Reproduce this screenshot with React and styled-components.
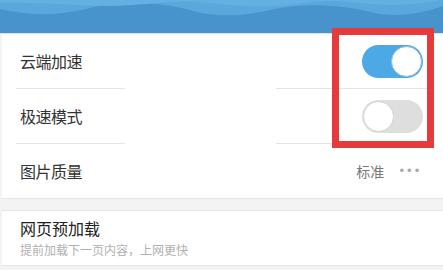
import React, { useState } from 'react'
import styled, { createGlobalStyle } from 'styled-components'

const GlobalStyle = createGlobalStyle`
  html, body {
    margin: 0;
    padding: 0;
    background: #f3f3f3;
    font-family: "Noto Sans CJK SC", "Noto Sans", sans-serif;
  }
`

const Page = styled.div`
  position: relative;
  width: 443px;
  height: 270px;
  overflow: hidden;
  background: #f3f3f3;
`

const Header = styled.div`
  height: 33px;
  background: #4893cc;
  border-bottom: 1px solid #cfe7f6;
  svg {
    display: block;
  }
`

const Card = styled.div`
  margin-left: 2px;
  background: #fff;
  border-bottom: 1px solid #e6e6e6;
  border-top: ${p => (p.$top ? '1px solid #e6e6e6' : 'none')};
  margin-top: ${p => (p.$top ? '11px' : '0')};
`

const Row = styled.div`
  height: 54px;
  display: flex;
  align-items: center;
  justify-content: space-between;
  padding: 0 20px 0 18px;
`

const Divider = styled.div`
  height: 1px;
  margin-left: 14px;
  margin-right: 13px;
  background: linear-gradient(
    to right,
    #e4e4e4 0,
    #e4e4e4 109px,
    transparent 109px,
    transparent 260px,
    #e4e4e4 260px
  );
`

const Label = styled.span`
  font-size: 16px;
  color: #333;
  letter-spacing: -0.5px;
`

const Right = styled.div`
  display: flex;
  align-items: center;
  gap: 14px;
  padding-right: 2px;
`

const Value = styled.span`
  font-size: 14px;
  color: #777;
`

const Dots = styled.span`
  font-size: 12px;
  color: #aaa;
  letter-spacing: 0.5px;
  font-family: "DejaVu Sans", sans-serif;
`

const Track = styled.button`
  width: 61px;
  height: 33px;
  border-radius: 17px;
  border: none;
  padding: 1px;
  background: ${p => (p.$on ? '#4da8e6' : '#dedede')};
  display: flex;
  justify-content: ${p => (p.$on ? 'flex-end' : 'flex-start')};
  align-items: center;
  cursor: pointer;
`

const Knob = styled.span`
  width: 29px;
  height: 29px;
  border-radius: 50%;
  background: #fff;
  border: 1px solid ${p => (p.$on ? '#8dbfe0' : '#d4d4d4')};
`

const Texts = styled.div`
  display: flex;
  flex-direction: column;
  gap: 3px;
  padding-top: 1px;
`

const Title = styled.span`
  font-size: 16px;
  color: #222;
  line-height: 20px;
`

const Sub = styled.span`
  font-size: 12px;
  color: #b0b0b0;
  line-height: 18px;
`

const Highlight = styled.div`
  position: absolute;
  left: 332px;
  top: 28px;
  width: 88px;
  height: 106px;
  border: 7.5px solid #e63a3b;
`

function Toggle({ on, onClick }) {
  return (
    <Track $on={on} onClick={onClick}>
      <Knob $on={on} />
    </Track>
  )
}

export default function App() {
  const [cloud, setCloud] = useState(true)
  const [fast, setFast] = useState(false)

  return (
    <Page>
      <GlobalStyle />
      <Header>
        <svg width="443" height="33" viewBox="0 0 443 33">
          <path
            d="M0 0 H443 V6 C420 14 395 18 370 12 C340 4 300 3 270 10 C245 16 215 18 190 10 C160 2 120 0 90 8 C60 16 30 16 0 9 Z"
            fill="#5aa7dc"
          />
          <path
            d="M0 0 H443 V0 C410 6 380 6 350 2 C320 -1 300 4 280 6 C250 8 220 4 200 2 C170 0 140 6 110 6 C80 6 40 2 0 3 Z"
            fill="#64b0e2"
          />
        </svg>
      </Header>
      <Card>
        <Row>
          <Label>云端加速</Label>
          <Toggle on={cloud} onClick={() => setCloud(!cloud)} />
        </Row>
        <Divider />
        <Row>
          <Label>极速模式</Label>
          <Toggle on={fast} onClick={() => setFast(!fast)} />
        </Row>
        <Divider />
        <Row>
          <Label>图片质量</Label>
          <Right>
            <Value>标准</Value>
            <Dots>•••</Dots>
          </Right>
        </Row>
      </Card>
      <Card $top>
        <Row>
          <Texts>
            <Title>网页预加载</Title>
            <Sub>提前加载下一页内容，上网更快</Sub>
          </Texts>
        </Row>
      </Card>
      <Highlight />
    </Page>
  )
}
